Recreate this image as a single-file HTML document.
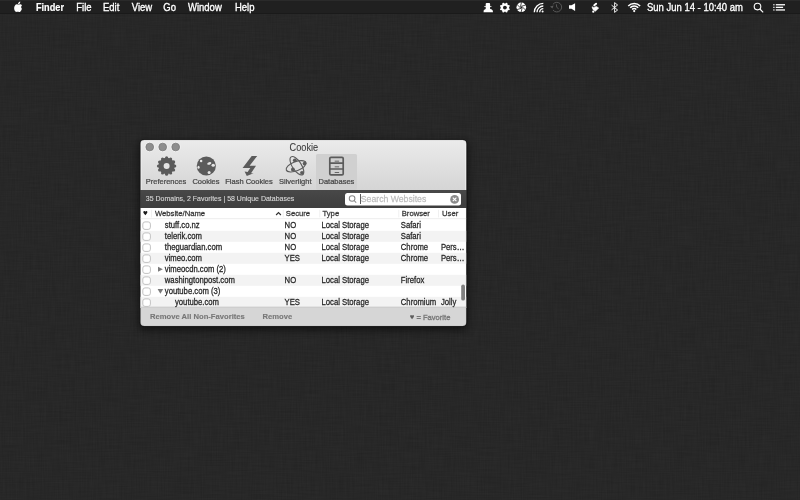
<!DOCTYPE html>
<html><head><meta charset="utf-8"><style>
html,body{margin:0;padding:0;width:800px;height:500px;overflow:hidden;background:#2a2a2a;}
svg{display:block;filter:grayscale(1);}
text{font-family:"Liberation Sans",sans-serif;}
</style></head><body>
<svg width="800" height="500" viewBox="0 0 800 500">
<defs>
<linearGradient id="tb" x1="0" y1="0" x2="0" y2="1"><stop offset="0" stop-color="#ebebeb"/><stop offset="1" stop-color="#d5d5d5"/></linearGradient>
<linearGradient id="strip" x1="0" y1="0" x2="0" y2="1"><stop offset="0" stop-color="#484848"/><stop offset="1" stop-color="#3e3e3e"/></linearGradient>
<filter id="shadow" x="-20%" y="-20%" width="140%" height="140%"><feGaussianBlur stdDeviation="4.5"/></filter>
<pattern id="linen" width="4" height="4" patternUnits="userSpaceOnUse"><rect x="0" y="0" width="1" height="4" fill="#fff" opacity="0.008"/><rect x="0" y="2" width="4" height="1" fill="#000" opacity="0.02"/></pattern>
<filter id="linenf" x="0" y="0" width="100%" height="100%" color-interpolation-filters="sRGB">
<feTurbulence type="fractalNoise" baseFrequency="0.8 0.04" numOctaves="2" seed="3" result="v"/>
<feTurbulence type="fractalNoise" baseFrequency="0.04 0.8" numOctaves="2" seed="7" result="h"/>
<feComposite in="v" in2="h" operator="arithmetic" k1="0" k2="0.5" k3="0.5" k4="0" result="m"/>
<feColorMatrix in="m" type="matrix" values="0 0 0 1.6 -0.3  0 0 0 1.6 -0.3  0 0 0 1.6 -0.3  0 0 0 0 1"/>
</filter>
</defs>
<rect x="0" y="0" width="800" height="500" fill="#252525"/>
<rect x="0" y="0" width="800" height="500" filter="url(#linenf)" opacity="0.028"/>
<rect x="0" y="0" width="800" height="14" fill="#202020"/>
<rect x="0" y="0" width="800" height="1" fill="#2a2a2a"/>
<rect x="0" y="13.2" width="800" height="0.8" fill="#1a1a1a"/>
<g transform="translate(14.1,1.2) scale(0.052,0.054)" fill="#fff"><path d="M150 140 C145 158 135 175 122 190 C112 201 98 203 86 197 C76 192 66 192 55 197 C43 203 31 200 21 188 C-2 158 -6 112 14 82 C25 66 40 58 56 58 C69 58 77 65 85 65 C93 65 103 57 118 57 C131 57 144 63 152 74 C132 87 131 121 150 140 Z"/><path d="M118 6 C120 22 113 38 103 47 C95 55 85 58 76 57 C74 42 81 27 91 18 C99 11 109 7 118 6 Z"/></g>
<text transform="translate(35.9 10.5) scale(1 1.15)" x="0" y="0" font-size="9.2" fill="#fff" stroke="#fff" stroke-width="0.15" font-weight="bold" text-anchor="start">Finder</text>
<text transform="translate(76.3 10.5) scale(1 1.15)" x="0" y="0" font-size="9.5" fill="#fff" stroke="#fff" stroke-width="0.3" font-weight="normal" text-anchor="start">File</text>
<text transform="translate(103 10.5) scale(1 1.15)" x="0" y="0" font-size="9.5" fill="#fff" stroke="#fff" stroke-width="0.3" font-weight="normal" text-anchor="start">Edit</text>
<text transform="translate(131.8 10.5) scale(1 1.15)" x="0" y="0" font-size="9.5" fill="#fff" stroke="#fff" stroke-width="0.3" font-weight="normal" text-anchor="start">View</text>
<text transform="translate(163.3 10.5) scale(1 1.15)" x="0" y="0" font-size="9.5" fill="#fff" stroke="#fff" stroke-width="0.3" font-weight="normal" text-anchor="start">Go</text>
<text transform="translate(188 10.5) scale(1 1.15)" x="0" y="0" font-size="9.5" fill="#fff" stroke="#fff" stroke-width="0.3" font-weight="normal" text-anchor="start">Window</text>
<text transform="translate(235 10.5) scale(1 1.15)" x="0" y="0" font-size="9.5" fill="#fff" stroke="#fff" stroke-width="0.3" font-weight="normal" text-anchor="start">Help</text>
<text transform="translate(647 10.5) scale(1 1.15)" x="0" y="0" font-size="9.5" fill="#fff" stroke="#fff" stroke-width="0.3" font-weight="normal" text-anchor="start">Sun Jun 14 - 10:40 am</text>
<g fill="#fff"><path d="M485.7,9.4 L485.7,4.0 Q485.7,3.1 486.6,3.1 L489.2,3.1 Q490.1,3.1 490.1,4.0 L490.1,9.4 Z"/><rect x="484.2" y="6.2" width="7.3" height="0.85" rx="0.3"/><path d="M483.5,12.3 L483.8,10.5 Q484.3,9.0 485.9,8.9 L490.4,8.9 Q492.2,9.0 492.7,10.5 L493.0,12.3 Z"/></g>
<g fill="#fff"><circle cx="504.9" cy="7.6" r="4.2"/><circle cx="508.73" cy="9.19" r="1.05"/><circle cx="506.49" cy="11.43" r="1.05"/><circle cx="503.31" cy="11.43" r="1.05"/><circle cx="501.07" cy="9.19" r="1.05"/><circle cx="501.07" cy="6.01" r="1.05"/><circle cx="503.31" cy="3.77" r="1.05"/><circle cx="506.49" cy="3.77" r="1.05"/><circle cx="508.73" cy="6.01" r="1.05"/></g><circle cx="504.9" cy="7.6" r="1.9" fill="#1f1f1f"/>
<g><circle cx="521.3" cy="7.3" r="4.8" fill="#fff"/><path d="M522.18,7.78 L521.09,12.25" stroke="#1f1f1f" stroke-width="0.8" fill="none"/><path d="M521.32,8.30 L516.91,9.59" stroke="#1f1f1f" stroke-width="0.8" fill="none"/><path d="M520.45,7.82 L517.12,4.65" stroke="#1f1f1f" stroke-width="0.8" fill="none"/><path d="M520.42,6.82 L521.51,2.35" stroke="#1f1f1f" stroke-width="0.8" fill="none"/><path d="M521.28,6.30 L525.69,5.01" stroke="#1f1f1f" stroke-width="0.8" fill="none"/><path d="M522.15,6.78 L525.48,9.95" stroke="#1f1f1f" stroke-width="0.8" fill="none"/><circle cx="521.3" cy="7.3" r="0.9" fill="#1f1f1f"/></g>
<g stroke="#fff" stroke-width="1.3" fill="none"><path d="M534.30,12.30 A9.00,9.00 0 0,1 543.30,3.30"/><path d="M537.00,12.30 A6.30,6.30 0 0,1 543.30,6.00"/><path d="M539.70,12.30 A3.60,3.60 0 0,1 543.30,8.70"/></g><circle cx="542.6" cy="11.6" r="1" fill="#fff"/>
<g stroke="#5a5a5a" stroke-width="0.95" fill="none"><path d="M552.9,4.4 A4.8,4.8 0 1,1 553.0,10.0"/><path d="M556.4,4.3 L556.7,7.3 L558.7,8.9"/></g><path d="M550.0,6.6 L553.6,5.6 L552.4,8.4 Z" fill="#5a5a5a"/>
<path fill="#fff" d="M569,5.3 L571.5,5.3 L575.1,3.2 L575.1,10.9 L571.5,8.8 L569,8.8 Z"/>
<g fill="#fff"><path d="M596.1,3.7 L594.3,5.3" stroke="#fff" stroke-width="2.0" stroke-linecap="round"/><path d="M592.0,6.8 L593.8,7.4 L596.4,6.4 L598.7,8.1 L595.4,11.2 L592.9,9.4 Z" stroke="#fff" stroke-width="0.6" stroke-linejoin="round"/><circle cx="593.3" cy="11.7" r="1.15"/></g>
<path stroke="#fff" stroke-width="0.9" fill="none" d="M611.6,5.2 L617.6,10 L614.6,12.4 L614.6,2.6 L617.6,5 L611.6,9.8"/>
<g stroke="#fff" stroke-width="1.5" fill="none"><path d="M628.25,6.05 A8.00,8.00 0 0,1 640.15,6.05"/><path d="M630.19,7.79 A5.40,5.40 0 0,1 638.21,7.79"/><path d="M632.12,9.53 A2.80,2.80 0 0,1 636.28,9.53"/></g><circle cx="634.20" cy="11.10" r="1.1" fill="#fff"/>
<g stroke="#fff" stroke-width="1.1" fill="none"><circle cx="757.5" cy="6.6" r="3.3"/><path d="M759.9,9 L763.2,12.3"/></g>
<g fill="#fff"><rect x="773.3" y="4.1" width="1.2" height="1.3"/><rect x="775.8" y="4.1" width="9.2" height="1.3"/><rect x="773.3" y="6.7" width="1.2" height="1.3"/><rect x="775.8" y="6.7" width="7.3" height="1.3"/><rect x="773.3" y="9.3" width="1.2" height="1.3"/><rect x="775.8" y="9.3" width="9.2" height="1.3"/></g>
<rect x="139.3" y="142.5" width="328.1" height="187" rx="4" fill="#000" opacity="0.6" filter="url(#shadow)"/>
<rect x="139.4" y="139.3" width="327.90000000000003" height="187.6" rx="4.6" fill="#101010" opacity="0.75"/>
<clipPath id="wclip"><rect x="140.3" y="140" width="326.1" height="186" rx="4"/></clipPath>
<g clip-path="url(#wclip)">
<rect x="140.3" y="140" width="326.1" height="50" fill="url(#tb)"/>
<rect x="316" y="154" width="41" height="36" rx="1.5" fill="#d0d0d0"/>
<rect x="140.3" y="190" width="326.1" height="18" fill="url(#strip)"/>
<rect x="140.3" y="208" width="326.1" height="100" fill="#fff"/>
<rect x="140.3" y="230.8" width="326.1" height="11" fill="#f3f3f3"/>
<rect x="140.3" y="252.8" width="326.1" height="11" fill="#f3f3f3"/>
<rect x="140.3" y="274.8" width="326.1" height="11" fill="#f3f3f3"/>
<rect x="140.3" y="296.8" width="326.1" height="11" fill="#f3f3f3"/>
<rect x="140.3" y="218.5" width="326.1" height="0.6" fill="#e2e2e2"/>
<rect x="140.3" y="306.8" width="326.1" height="20" fill="#d6d6d6"/>
<rect x="140.3" y="306.8" width="326.1" height="0.6" fill="#c4c4c4"/>
<rect x="465.4" y="140" width="1" height="50" fill="#f6f6f6"/>
<rect x="141" y="140" width="0.8" height="50" fill="#f2f2f2" opacity="0.6"/>
</g>
<rect x="140.3" y="140" width="326.1" height="186" rx="4" fill="none" stroke="#8a8a8a" stroke-opacity="0.35" stroke-width="0.6"/>
<circle cx="149.75" cy="147.0" r="4.7" fill="none" stroke="#f3f3f3" stroke-width="0.8"/>
<circle cx="149.75" cy="147.0" r="3.85" fill="#8e8e8e" stroke="#787878" stroke-width="0.75"/>
<circle cx="162.7" cy="147.0" r="4.7" fill="none" stroke="#f3f3f3" stroke-width="0.8"/>
<circle cx="162.7" cy="147.0" r="3.85" fill="#8e8e8e" stroke="#787878" stroke-width="0.75"/>
<circle cx="175.7" cy="147.0" r="4.7" fill="none" stroke="#f3f3f3" stroke-width="0.8"/>
<circle cx="175.7" cy="147.0" r="3.85" fill="#8e8e8e" stroke="#787878" stroke-width="0.75"/>
<text transform="translate(303.85 150.7) scale(1 1.1)" x="0" y="0" font-size="9.2" fill="#3a3a3a" stroke="#3a3a3a" stroke-width="0.06" font-weight="normal" text-anchor="middle" >Cookie</text>
<g fill="#5b5b5b"><circle cx="166.6" cy="166" r="8.2"/><circle cx="174.75" cy="166.00" r="1.55"/><circle cx="173.66" cy="170.07" r="1.55"/><circle cx="170.67" cy="173.06" r="1.55"/><circle cx="166.60" cy="174.15" r="1.55"/><circle cx="162.53" cy="173.06" r="1.55"/><circle cx="159.54" cy="170.07" r="1.55"/><circle cx="158.45" cy="166.00" r="1.55"/><circle cx="159.54" cy="161.93" r="1.55"/><circle cx="162.52" cy="158.94" r="1.55"/><circle cx="166.60" cy="157.85" r="1.55"/><circle cx="170.67" cy="158.94" r="1.55"/><circle cx="173.66" cy="161.92" r="1.55"/></g><circle cx="166.6" cy="166.1" r="3.0" fill="#e4e4e4"/>
<circle cx="206.3" cy="166" r="9.6" fill="#5b5b5b"/>
<ellipse cx="201.10" cy="161.00" rx="1.25" ry="1.25" transform="rotate(0 201.10 161.00)" fill="#e6e6e6"/>
<ellipse cx="209.30" cy="163.40" rx="2.1" ry="1.3" transform="rotate(-15 209.30 163.40)" fill="#e6e6e6"/>
<ellipse cx="213.20" cy="165.20" rx="1.7" ry="1.5" transform="rotate(0 213.20 165.20)" fill="#e6e6e6"/>
<ellipse cx="198.55" cy="167.15" rx="1.1" ry="1.5" transform="rotate(0 198.55 167.15)" fill="#e6e6e6"/>
<ellipse cx="209.10" cy="172.60" rx="1.5" ry="1.5" transform="rotate(0 209.10 172.60)" fill="#e6e6e6"/>
<path fill="#5b5b5b" d="M251.7,155.9 L257.2,155.9 L249.6,165.8 L256,165.8 L251,173.2 L253.6,173.2 L246.8,176 L244.6,171.5 L247.6,172 L250.3,168.1 L242.6,168.1 Z"/>
<g stroke="#5b5b5b" stroke-width="1.1" fill="none"><ellipse cx="296.9" cy="165.8" rx="10.6" ry="4.5" transform="rotate(57 296.9 165.8)"/><ellipse cx="296.1" cy="166.3" rx="10.5" ry="4.6" transform="rotate(-21 296.1 166.3)"/></g>
<circle cx="294.8" cy="160.3" r="1.9" fill="#5b5b5b"/>
<circle cx="304.6" cy="163.6" r="1.9" fill="#5b5b5b"/>
<circle cx="292.9" cy="169.4" r="1.9" fill="#5b5b5b"/>
<circle cx="302.0" cy="172.8" r="1.9" fill="#5b5b5b"/>
<g stroke="#5b5b5b" stroke-width="1.7" fill="none"><rect x="329.8" y="157.4" width="13.4" height="17.5" rx="1.2"/><path d="M329.8,163.2 L343.2,163.2 M329.8,169 L343.2,169"/></g>
<g fill="#5b5b5b"><rect x="334.7" y="160.7" width="4.4" height="0.9"/><rect x="334.7" y="166.4" width="4.4" height="0.9"/><rect x="334.7" y="172.1" width="4.4" height="0.9"/></g>
<text transform="translate(145.8 184.1) scale(1 1.04)" x="0" y="0" font-size="7.5" fill="#484848" stroke="#484848" stroke-width="0.24" font-weight="normal" text-anchor="start" >Preferences</text>
<text transform="translate(192.4 184.1) scale(1 1.04)" x="0" y="0" font-size="7.5" fill="#484848" stroke="#484848" stroke-width="0.24" font-weight="normal" text-anchor="start" >Cookies</text>
<text transform="translate(225.3 184.1) scale(1 1.04)" x="0" y="0" font-size="7.5" fill="#484848" stroke="#484848" stroke-width="0.24" font-weight="normal" text-anchor="start" >Flash Cookies</text>
<text transform="translate(279 184.1) scale(1 1.04)" x="0" y="0" font-size="7.5" fill="#484848" stroke="#484848" stroke-width="0.24" font-weight="normal" text-anchor="start" >Silverlight</text>
<text transform="translate(318.5 184.1) scale(1 1.04)" x="0" y="0" font-size="7.5" fill="#484848" stroke="#484848" stroke-width="0.24" font-weight="normal" text-anchor="start" >Databases</text>
<text transform="translate(145.8 201.3) scale(1 1.08)" x="0" y="0" font-size="7.0" fill="#dadada" stroke="#dadada" stroke-width="0.1" font-weight="normal" text-anchor="start" >35 Domains, 2 Favorites | 58 Unique Databases</text>
<rect x="345" y="193" width="116" height="12.5" rx="2.5" fill="#fff"/>
<g stroke="#888" stroke-width="1.05" fill="none"><circle cx="352.1" cy="198.5" r="2.8"/><path d="M354.1,200.5 L356.2,202.6"/></g>
<rect x="360" y="194" width="0.8" height="10" fill="#333"/>
<text transform="translate(360.8 202.2) scale(1 1.1)" x="0" y="0" font-size="8.7" fill="#bdbdbd" stroke="#bdbdbd" stroke-width="0.24" font-weight="normal" text-anchor="start" >Search Websites</text>
<circle cx="454.6" cy="199.4" r="4.4" fill="#8a8a8a"/>
<path d="M452.8,197.6 L456.4,201.2 M456.4,197.6 L452.8,201.2" stroke="#fff" stroke-width="1.1"/>
<path d="M145.35,215.30 L143.74,213.15 C142.96,212.20 143.28,211.00 144.34,211.00 C144.89,211.00 145.12,211.34 145.35,211.86 C145.58,211.34 145.81,211.00 146.36,211.00 C147.42,211.00 147.74,212.20 146.96,213.15 Z" fill="#1a1a1a"/>
<rect x="151.1" y="209.8" width="0.7" height="7.6" fill="#eaeaea"/>
<rect x="282.8" y="209.8" width="0.7" height="7.6" fill="#eaeaea"/>
<rect x="319.5" y="209.8" width="0.7" height="7.6" fill="#eaeaea"/>
<rect x="398.5" y="209.8" width="0.7" height="7.6" fill="#eaeaea"/>
<rect x="438.3" y="209.8" width="0.7" height="7.6" fill="#eaeaea"/>
<text transform="translate(154.9 216.3) scale(1 1.05)" x="0" y="0" font-size="7.7" fill="#353535" stroke="#353535" stroke-width="0.24" font-weight="normal" text-anchor="start" >Website/Name</text>
<path d="M276.1,215.0 L278.5,212.5 L280.9,215.0" stroke="#333" stroke-width="1.15" fill="none"/>
<text transform="translate(285.8 216.3) scale(1 1.05)" x="0" y="0" font-size="7.7" fill="#353535" stroke="#353535" stroke-width="0.24" font-weight="normal" text-anchor="start" >Secure</text>
<text transform="translate(322.5 216.3) scale(1 1.05)" x="0" y="0" font-size="7.7" fill="#353535" stroke="#353535" stroke-width="0.24" font-weight="normal" text-anchor="start" >Type</text>
<text transform="translate(401.7 216.3) scale(1 1.05)" x="0" y="0" font-size="7.7" fill="#353535" stroke="#353535" stroke-width="0.24" font-weight="normal" text-anchor="start" >Browser</text>
<text transform="translate(442 216.3) scale(1 1.05)" x="0" y="0" font-size="7.7" fill="#353535" stroke="#353535" stroke-width="0.24" font-weight="normal" text-anchor="start" >User</text>
<rect x="142.8" y="221.90" width="7.6" height="7.5" rx="2.2" fill="#fff" stroke="#c2c2c2" stroke-width="1.0"/>
<text transform="translate(164.8 227.55) scale(1 1.13)" x="0" y="0" font-size="7.7" fill="#262626" stroke="#262626" stroke-width="0.24" font-weight="normal" text-anchor="start" >stuff.co.nz</text>
<text transform="translate(284.6 227.55) scale(1 1.13)" x="0" y="0" font-size="7.7" fill="#262626" stroke="#262626" stroke-width="0.24" font-weight="normal" text-anchor="start" >NO</text>
<text transform="translate(321.5 227.55) scale(1 1.13)" x="0" y="0" font-size="7.7" fill="#262626" stroke="#262626" stroke-width="0.24" font-weight="normal" text-anchor="start" >Local Storage</text>
<text transform="translate(400.8 227.55) scale(1 1.13)" x="0" y="0" font-size="7.7" fill="#262626" stroke="#262626" stroke-width="0.24" font-weight="normal" text-anchor="start" >Safari</text>
<rect x="142.8" y="232.90" width="7.6" height="7.5" rx="2.2" fill="#fff" stroke="#c2c2c2" stroke-width="1.0"/>
<text transform="translate(164.8 238.55) scale(1 1.13)" x="0" y="0" font-size="7.7" fill="#262626" stroke="#262626" stroke-width="0.24" font-weight="normal" text-anchor="start" >telerik.com</text>
<text transform="translate(284.6 238.55) scale(1 1.13)" x="0" y="0" font-size="7.7" fill="#262626" stroke="#262626" stroke-width="0.24" font-weight="normal" text-anchor="start" >NO</text>
<text transform="translate(321.5 238.55) scale(1 1.13)" x="0" y="0" font-size="7.7" fill="#262626" stroke="#262626" stroke-width="0.24" font-weight="normal" text-anchor="start" >Local Storage</text>
<text transform="translate(400.8 238.55) scale(1 1.13)" x="0" y="0" font-size="7.7" fill="#262626" stroke="#262626" stroke-width="0.24" font-weight="normal" text-anchor="start" >Safari</text>
<rect x="142.8" y="243.90" width="7.6" height="7.5" rx="2.2" fill="#fff" stroke="#c2c2c2" stroke-width="1.0"/>
<text transform="translate(164.8 249.55) scale(1 1.13)" x="0" y="0" font-size="7.7" fill="#262626" stroke="#262626" stroke-width="0.24" font-weight="normal" text-anchor="start" >theguardian.com</text>
<text transform="translate(284.6 249.55) scale(1 1.13)" x="0" y="0" font-size="7.7" fill="#262626" stroke="#262626" stroke-width="0.24" font-weight="normal" text-anchor="start" >NO</text>
<text transform="translate(321.5 249.55) scale(1 1.13)" x="0" y="0" font-size="7.7" fill="#262626" stroke="#262626" stroke-width="0.24" font-weight="normal" text-anchor="start" >Local Storage</text>
<text transform="translate(400.8 249.55) scale(1 1.13)" x="0" y="0" font-size="7.7" fill="#262626" stroke="#262626" stroke-width="0.24" font-weight="normal" text-anchor="start" >Chrome</text>
<text transform="translate(440.9 249.55) scale(1 1.13)" x="0" y="0" font-size="7.7" fill="#262626" stroke="#262626" stroke-width="0.24" font-weight="normal" text-anchor="start" >Pers…</text>
<rect x="142.8" y="254.90" width="7.6" height="7.5" rx="2.2" fill="#fff" stroke="#c2c2c2" stroke-width="1.0"/>
<text transform="translate(164.8 260.55) scale(1 1.13)" x="0" y="0" font-size="7.7" fill="#262626" stroke="#262626" stroke-width="0.24" font-weight="normal" text-anchor="start" >vimeo.com</text>
<text transform="translate(284.6 260.55) scale(1 1.13)" x="0" y="0" font-size="7.7" fill="#262626" stroke="#262626" stroke-width="0.24" font-weight="normal" text-anchor="start" >YES</text>
<text transform="translate(321.5 260.55) scale(1 1.13)" x="0" y="0" font-size="7.7" fill="#262626" stroke="#262626" stroke-width="0.24" font-weight="normal" text-anchor="start" >Local Storage</text>
<text transform="translate(400.8 260.55) scale(1 1.13)" x="0" y="0" font-size="7.7" fill="#262626" stroke="#262626" stroke-width="0.24" font-weight="normal" text-anchor="start" >Chrome</text>
<text transform="translate(440.9 260.55) scale(1 1.13)" x="0" y="0" font-size="7.7" fill="#262626" stroke="#262626" stroke-width="0.24" font-weight="normal" text-anchor="start" >Pers…</text>
<rect x="142.8" y="265.90" width="7.6" height="7.5" rx="2.2" fill="#fff" stroke="#c2c2c2" stroke-width="1.0"/>
<path d="M158.0,266.70 L162.8,269.20 L158.0,271.70 Z" fill="#7a7a7a"/>
<text transform="translate(164.8 271.55) scale(1 1.13)" x="0" y="0" font-size="7.7" fill="#262626" stroke="#262626" stroke-width="0.24" font-weight="normal" text-anchor="start" >vimeocdn.com (2)</text>
<rect x="142.8" y="276.90" width="7.6" height="7.5" rx="2.2" fill="#fff" stroke="#c2c2c2" stroke-width="1.0"/>
<text transform="translate(164.8 282.55) scale(1 1.13)" x="0" y="0" font-size="7.7" fill="#262626" stroke="#262626" stroke-width="0.24" font-weight="normal" text-anchor="start" >washingtonpost.com</text>
<text transform="translate(284.6 282.55) scale(1 1.13)" x="0" y="0" font-size="7.7" fill="#262626" stroke="#262626" stroke-width="0.24" font-weight="normal" text-anchor="start" >NO</text>
<text transform="translate(321.5 282.55) scale(1 1.13)" x="0" y="0" font-size="7.7" fill="#262626" stroke="#262626" stroke-width="0.24" font-weight="normal" text-anchor="start" >Local Storage</text>
<text transform="translate(400.8 282.55) scale(1 1.13)" x="0" y="0" font-size="7.7" fill="#262626" stroke="#262626" stroke-width="0.24" font-weight="normal" text-anchor="start" >Firefox</text>
<rect x="142.8" y="287.90" width="7.6" height="7.5" rx="2.2" fill="#fff" stroke="#c2c2c2" stroke-width="1.0"/>
<path d="M157.6,289.00 L163.2,289.00 L160.4,293.80 Z" fill="#7a7a7a"/>
<text transform="translate(164.8 293.55) scale(1 1.13)" x="0" y="0" font-size="7.7" fill="#262626" stroke="#262626" stroke-width="0.24" font-weight="normal" text-anchor="start" >youtube.com (3)</text>
<rect x="142.8" y="298.90" width="7.6" height="7.5" rx="2.2" fill="#fff" stroke="#c2c2c2" stroke-width="1.0"/>
<text transform="translate(175 304.55) scale(1 1.13)" x="0" y="0" font-size="7.7" fill="#262626" stroke="#262626" stroke-width="0.24" font-weight="normal" text-anchor="start" >youtube.com</text>
<text transform="translate(284.6 304.55) scale(1 1.13)" x="0" y="0" font-size="7.7" fill="#262626" stroke="#262626" stroke-width="0.24" font-weight="normal" text-anchor="start" >YES</text>
<text transform="translate(321.5 304.55) scale(1 1.13)" x="0" y="0" font-size="7.7" fill="#262626" stroke="#262626" stroke-width="0.24" font-weight="normal" text-anchor="start" >Local Storage</text>
<text transform="translate(400.8 304.55) scale(1 1.13)" x="0" y="0" font-size="7.7" fill="#262626" stroke="#262626" stroke-width="0.24" font-weight="normal" text-anchor="start" >Chromium</text>
<text transform="translate(440.9 304.55) scale(1 1.13)" x="0" y="0" font-size="7.7" fill="#262626" stroke="#262626" stroke-width="0.24" font-weight="normal" text-anchor="start" >Jolly</text>
<rect x="461.2" y="284.4" width="3.8" height="16.2" rx="1.9" fill="#808080"/>
<text transform="translate(150 319.35) scale(1 1.0)" x="0" y="0" font-size="7.65" fill="#777777" stroke="#777777" stroke-width="0.12" font-weight="bold" text-anchor="start" >Remove All Non-Favorites</text>
<text transform="translate(262.4 319.35) scale(1 1.0)" x="0" y="0" font-size="7.65" fill="#777777" stroke="#777777" stroke-width="0.12" font-weight="bold" text-anchor="start" >Remove</text>
<path d="M412.05,319.30 L410.51,317.20 C409.76,316.28 410.07,315.10 411.08,315.10 C411.61,315.10 411.83,315.44 412.05,315.94 C412.27,315.44 412.49,315.10 413.02,315.10 C414.03,315.10 414.34,316.28 413.59,317.20 Z" fill="#5e5e5e"/>
<text transform="translate(416.4 319.5) scale(1 1.05)" x="0" y="0" font-size="7.6" fill="#777777" stroke="#777777" stroke-width="0.3" font-weight="normal" text-anchor="start" >= Favorite</text>
</svg>
</body></html>
